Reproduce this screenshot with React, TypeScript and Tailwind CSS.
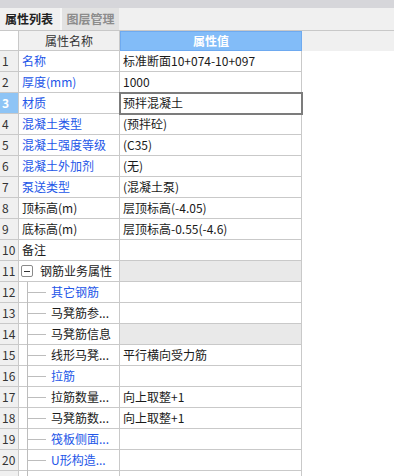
import React from 'react';

type Row = {
  n: number | null;
  name: string;
  value?: string;
  blue?: boolean;
  child?: boolean;
  group?: boolean;
  shaded?: boolean;
  selected?: boolean;
};

const rows: Row[] = [
  { n: 1, name: '名称', value: '标准断面10+074-10+097', blue: true },
  { n: 2, name: '厚度(mm)', value: '1000', blue: true },
  { n: 3, name: '材质', value: '预拌混凝土', blue: true, selected: true },
  { n: 4, name: '混凝土类型', value: '(预拌砼)', blue: true },
  { n: 5, name: '混凝土强度等级', value: '(C35)', blue: true },
  { n: 6, name: '混凝土外加剂', value: '(无)', blue: true },
  { n: 7, name: '泵送类型', value: '(混凝土泵)', blue: true },
  { n: 8, name: '顶标高(m)', value: '层顶标高(-4.05)' },
  { n: 9, name: '底标高(m)', value: '层顶标高-0.55(-4.6)' },
  { n: 10, name: '备注' },
  { n: 11, name: '钢筋业务属性', group: true, shaded: true },
  { n: 12, name: '其它钢筋', blue: true, child: true },
  { n: 13, name: '马凳筋参...', child: true },
  { n: 14, name: '马凳筋信息', child: true, shaded: true },
  { n: 15, name: '线形马凳...', value: '平行横向受力筋', child: true },
  { n: 16, name: '拉筋', blue: true, child: true },
  { n: 17, name: '拉筋数量...', value: '向上取整+1', child: true },
  { n: 18, name: '马凳筋数...', value: '向上取整+1', child: true },
  { n: 19, name: '筏板侧面...', blue: true, child: true },
  { n: 20, name: 'U形构造...', blue: true, child: true },
  // next row only peeks in at the bottom edge
  { n: null, name: '', child: true },
];

const font = { fontFamily: '"Noto Sans CJK SC", "Noto Sans", sans-serif' };

function NameCell({ row }: { row: Row }) {
  const color = row.blue ? 'text-[#2356e8]' : 'text-[#1a1a1a]';
  if (row.group) {
    return (
      <div className="flex items-center w-[101px] h-[21px] border-r border-b border-[#c9c9c9] bg-white">
        <div className="ml-[2px] w-[12px] h-[12px] border border-[#8a8a8a] rounded-[2px] bg-white flex items-center justify-center">
          <div className="w-[6px] h-px bg-[#333]" />
        </div>
        <span className="ml-[7px] text-[12px] leading-[20px] text-[#1a1a1a]">{row.name}</span>
      </div>
    );
  }
  if (row.child) {
    return (
      <div className="flex items-stretch w-[101px] h-[21px] border-r border-b border-[#c9c9c9] bg-white">
        <div className="ml-[8px] w-px bg-[#bdbdbd] -mb-px" />
        <div className="flex items-center">
          <div className="w-[18px] h-px bg-[#bdbdbd]" />
          <span className={`ml-[5px] text-[12px] leading-[20px] whitespace-nowrap ${color}`}>{row.name}</span>
        </div>
      </div>
    );
  }
  return (
    <div className={`w-[101px] h-[21px] border-r border-b border-[#c9c9c9] bg-white pl-[3px] text-[12px] leading-[20px] whitespace-nowrap ${color}`}>
      {row.name}
    </div>
  );
}

export default function App() {
  return (
    <div className="w-[394px] h-[476px] overflow-hidden bg-white" style={font}>
      <div className="h-[8px] bg-[#d6d6da]" />
      <div className="flex h-[22px] bg-[#f0f0f0]">
        <div className="w-[60px] flex items-center pl-[5px] text-[12px] font-bold text-[#222]">属性列表</div>
        <div className="w-[2px] bg-[#f7f7f7]" />
        <div className="w-[57px] flex items-center justify-center bg-[#e2e2e2] text-[12px] font-bold text-[#8c8c8c]">图层管理</div>
      </div>
      <div className="flex h-[21px] border-t border-[#c8c8c8] bg-[#f0f0f0]">
        <div className="w-[19px] h-[20px] bg-white border-r border-b border-[#c9c9c9]" />
        <div className="w-[101px] h-[20px] border-r border-b border-[#c9c9c9] text-center text-[12px] leading-[19px] text-[#333]">属性名称</div>
        <div className="w-[182px] h-[20px] bg-[#82bcf8] border border-[#6eaaf0] text-center text-[12px] leading-[18px] font-bold text-white">属性值</div>
      </div>
      {rows.map((row, i) => (
        <div key={i} className="flex">
          <div
            className={`w-[19px] h-[21px] border-r border-b border-[#c9c9c9] pl-[2px] text-[12px] leading-[20px] ${
              row.selected ? 'bg-[#8ec4f5] text-white font-bold' : 'bg-[#f0f0f0] text-[#333]'
            }`}
          >
            {row.n}
          </div>
          <NameCell row={row} />
          <div
            className={`relative w-[182px] h-[21px] border-r border-b border-[#c9c9c9] pl-[3px] text-[12px] leading-[20px] text-[#1a1a1a] whitespace-nowrap ${
              row.shaded ? 'bg-[#e9e9e9]' : 'bg-white'
            } ${row.selected ? 'z-10 outline-2 outline-solid outline-[#7c7c7c] -outline-offset-1' : ''}`}
          >
            {row.value}
          </div>
        </div>
      ))}
    </div>
  );
}
